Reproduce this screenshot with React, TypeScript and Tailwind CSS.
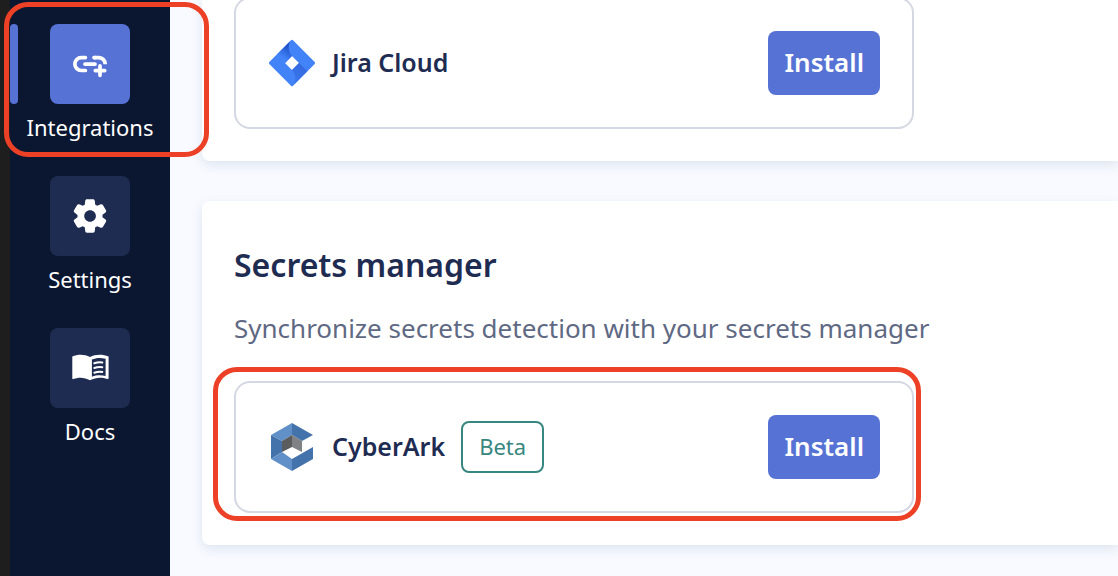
import type { ReactNode } from "react";

function AddLinkIcon() {
  return (
    <svg viewBox="0 0 36 36" className="size-9" fill="none" stroke="currentColor" strokeWidth="3.7" aria-hidden="true">
      <path d="M13.4 11.6H9.3a6.45 6.45 0 0 0 0 12.9h4.1" strokeLinecap="round" />
      <path d="M13 18.1h10" strokeLinecap="round" />
      <path d="M22 11.6h5a6.4 6.4 0 0 1 6.2 6.6" />
      <path d="M22 11.6h1M28 19.9v9.4M23.3 24.6h9.4" strokeLinecap="round" />
    </svg>
  );
}

function GearIcon() {
  return (
    <svg viewBox="0 0 24 24" className="size-10" fill="currentColor" aria-hidden="true">
      <path d="M19.5 12c0-.23-.01-.45-.03-.68l1.86-1.41c.4-.3.51-.86.26-1.3l-1.87-3.23c-.25-.44-.79-.62-1.25-.42l-2.15.91c-.37-.26-.76-.49-1.17-.68l-.29-2.31c-.06-.5-.49-.88-.99-.88h-3.73c-.51 0-.94.38-1 .88l-.29 2.31c-.41.19-.8.42-1.17.68l-2.15-.91c-.46-.2-1-.02-1.25.42L2.41 8.62c-.25.44-.14.99.26 1.3l1.86 1.41c-.02.22-.03.44-.03.67s.01.45.03.68l-1.86 1.41c-.4.3-.51.86-.26 1.3l1.87 3.23c.25.44.79.62 1.25.42l2.15-.91c.37.26.76.49 1.17.68l.29 2.31c.06.5.49.88.99.88h3.73c.5 0 .93-.38.99-.88l.29-2.31c.41-.19.8-.42 1.17-.68l2.15.91c.46.2 1 .02 1.25-.42l1.87-3.23c.25-.44.14-.99-.26-1.3l-1.86-1.41c.03-.23.04-.45.04-.68zm-7.46 3.5c-1.93 0-3.5-1.57-3.5-3.5s1.57-3.5 3.5-3.5 3.5 1.57 3.5 3.5-1.57 3.5-3.5 3.5z" />
    </svg>
  );
}

function BookIcon() {
  return (
    <svg viewBox="5 5 40 40" className="size-10" fill="none" aria-hidden="true">
      <path
        fillRule="evenodd"
        fill="currentColor"
        d="M7.3 13.6C12.5 11 19.5 11 25 13.9c5.5-2.9 12.9-2.9 18.6-.3V35c0 .9-.5 1.3-1.3 1-5.3-2-11.7-2-17.3 1.3-5.600-3.300-11.600-3.300-16.600-1.200-.7.3-1.100-.1-1.100-.9zM26.900 16.500v17.300c4.500-1.900 9.200-1.900 13.700-.8V15.800c-4.600-1.300-9.200-1.300-13.700.7z"
      />
      <path
        stroke="currentColor"
        strokeWidth="2"
        strokeLinecap="round"
        d="M29.300 20.300q4-1.400 8-.8M29.300 25q4-1.400 8-.8M29.300 29.700q4-1.400 8-.8"
      />
    </svg>
  );
}

function JiraLogo() {
  return (
    <svg viewBox="0 0 144 144" className="size-12 shrink-0" aria-hidden="true">
      <defs>
        <linearGradient id="jira-top" x1="66" y1="18" x2="42" y2="54" gradientUnits="userSpaceOnUse">
          <stop offset="0.1" stopColor="#1d4fc4" />
          <stop offset="1" stopColor="#4283f8" />
        </linearGradient>
        <linearGradient id="jira-bottom" x1="82" y1="124" x2="112" y2="80" gradientUnits="userSpaceOnUse">
          <stop offset="0" stopColor="#3a76ea" />
          <stop offset="1" stopColor="#3568df" />
        </linearGradient>
      </defs>
      <path
        fillRule="evenodd"
        fill="#4283f8"
        d="M69 4q3-3 6 0l65 65q3 3 0 6l-65 65q-3 3-6 0L4 75q-3-3 0-6zM72 51L51 72l21 21 21-21z"
      />
      <path d="M67 6C59 18 61 39 72 51L51 72 28 45z" fill="url(#jira-top)" />
      <path d="M77 138c8-12 6-33-5-45l21-21 25 25z" fill="url(#jira-bottom)" />
    </svg>
  );
}

function CyberArkLogo() {
  return (
    <svg viewBox="-9 0 144 144" className="size-12 shrink-0" aria-hidden="true">
      <path d="M0 36L63 0v36L33 54z" fill="#6190c8" />
      <path d="M63 0l63 36-33 18-30-18z" fill="#4472aa" />
      <path d="M0 36l33 18v33L0 108z" fill="#4472aa" />
      <path d="M0 108l33-21 30 21v36z" fill="#6190c8" />
      <path d="M63 144v-36l63-36v36z" fill="#4472aa" />
      <path d="M33 54l30-18v36L33 87z" fill="#5b5c5e" />
      <path d="M63 36l30 18v33L63 72z" fill="#808184" />
    </svg>
  );
}

function NavItem({ label, icon, active = false }: { label: string; icon: ReactNode; active?: boolean }) {
  return (
    <a href="#" className="relative flex flex-col items-center gap-2 text-white">
      {active && <span className="absolute top-0 left-0 h-20 w-2 rounded-sm bg-[#5672d5]" />}
      <span className={`flex size-20 items-center justify-center rounded-lg ${active ? "bg-[#5672d5]" : "bg-[#1f2c52]"}`}>
        {icon}
      </span>
      <span className="pb-0.5 text-[22px] leading-[30px]">{label}</span>
    </a>
  );
}

function Integration({ name, logo, beta = false }: { name: string; logo: ReactNode; beta?: boolean }) {
  return (
    <div className="flex h-33 max-w-[680px] items-center gap-4 rounded-2xl border-2 border-[#d5d8e2] px-8">
      {logo}
      <span className="pb-0.5 text-[25px] leading-8 font-semibold">{name}</span>
      {beta && (
        <span className="rounded-lg border-2 border-[#388680] px-4 pt-2 pb-2.5 text-[22px] leading-[30px] text-[#388680]">Beta</span>
      )}
      <button type="button" className="ml-auto h-16 rounded-lg bg-[#5672d5] px-4 pb-0.5 text-[26px] font-semibold text-white">
        Install
      </button>
    </div>
  );
}

export default function App() {
  return (
    <div className="flex h-screen overflow-hidden bg-[#f8faff] font-['Noto_Sans',sans-serif] text-[#1f2c52]">
      <div className="w-2.5 shrink-0 bg-[#1e1e1e]" />
      <nav className="relative flex w-40 shrink-0 flex-col gap-8 bg-[#0b1630] pt-6">
        <NavItem label="Integrations" icon={<AddLinkIcon />} active />
        <NavItem label="Settings" icon={<GearIcon />} />
        <NavItem label="Docs" icon={<BookIcon />} />
        <div className="pointer-events-none absolute top-0.5 -left-1.5 z-10 h-[155px] w-[205px] rounded-3xl border-5 border-[#ec4126]" />
      </nav>
      <main className="-mt-[3px] flex min-w-0 flex-1 flex-col gap-10 pl-8">
        <section className="rounded-bl-lg bg-white px-8 pb-8 shadow-[0_4px_12px_#1f4c7a1f]">
          <Integration name="Jira Cloud" logo={<JiraLogo />} />
        </section>
        <section className="rounded-l-lg bg-white px-8 pt-10 pb-8 shadow-[0_4px_12px_#1f4c7a1f]">
          <h2 className="text-[32px] leading-12 font-semibold">Secrets manager</h2>
          <p className="mt-5 pb-0.5 text-[26px] leading-[38px] text-[#5f6984]">Synchronize secrets detection with your secrets manager</p>
          <div className="relative mt-8">
            <Integration name="CyberArk" logo={<CyberArkLogo />} beta />
            <div className="pointer-events-none absolute -top-3.5 -left-[21px] h-[154px] w-[708px] rounded-3xl border-5 border-[#ec4126]" />
          </div>
        </section>
      </main>
    </div>
  );
}
